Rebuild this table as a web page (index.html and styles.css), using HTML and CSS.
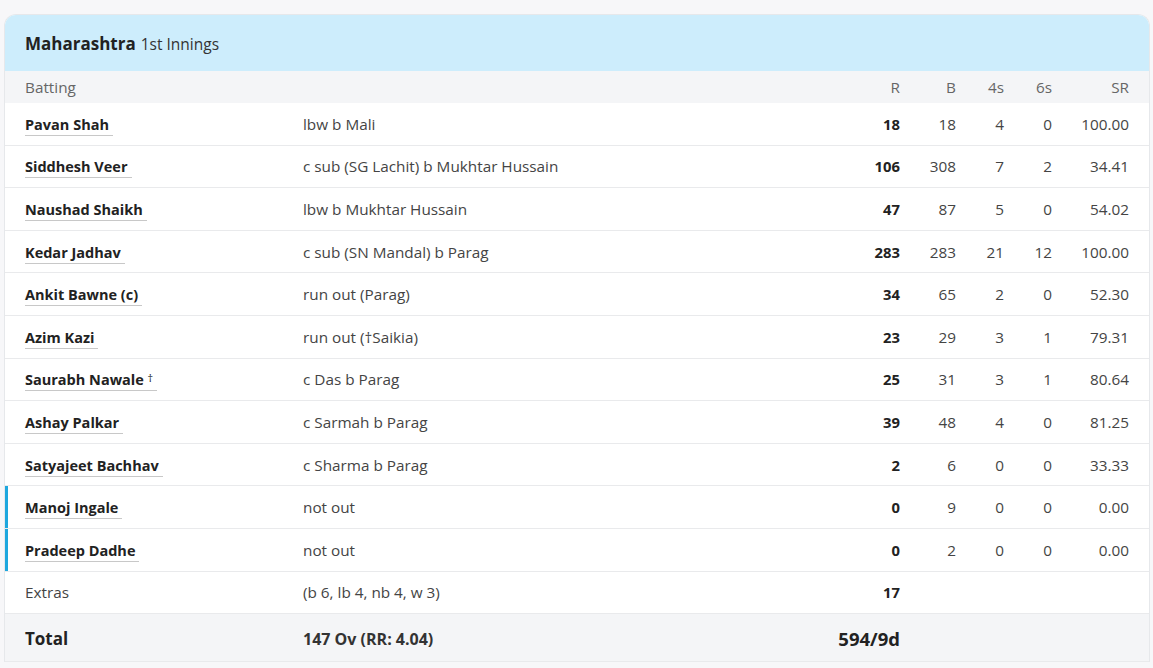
FILE: index.html
```html
<!DOCTYPE html>
<html lang="en">
<head>
    <meta charset="UTF-8">
    <meta name="viewport" content="width=device-width, initial-scale=1.0">
    <title>Maharashtra 1st Innings</title>
    <link rel="stylesheet" href="styles.css">
</head>
<body>

    <!-- Scorecard -->
    <div class="card">
        <div class="card-head">
            <span class="team">Maharashtra</span>
            <span class="innings">1st Innings</span>
        </div>

        <table class="score">
            <colgroup>
                <col class="c-name">
                <col class="c-out">
                <col class="c-r">
                <col class="c-b">
                <col class="c-4">
                <col class="c-6">
                <col class="c-sr">
            </colgroup>
            <thead>
                <tr>
                    <th class="name">Batting</th>
                    <th></th>
                    <th class="num">R</th>
                    <th class="num">B</th>
                    <th class="num">4s</th>
                    <th class="num">6s</th>
                    <th class="num last">SR</th>
                </tr>
            </thead>
            <tbody>
                <tr>
                    <td class="name"><a>Pavan Shah</a></td>
                    <td>lbw b Mali</td>
                    <td class="num runs">18</td><td class="num">18</td><td class="num">4</td><td class="num">0</td><td class="num last">100.00</td>
                </tr>
                <tr>
                    <td class="name"><a>Siddhesh Veer</a></td>
                    <td>c sub (SG Lachit) b Mukhtar Hussain</td>
                    <td class="num runs">106</td><td class="num">308</td><td class="num">7</td><td class="num">2</td><td class="num last">34.41</td>
                </tr>
                <tr>
                    <td class="name"><a>Naushad Shaikh</a></td>
                    <td>lbw b Mukhtar Hussain</td>
                    <td class="num runs">47</td><td class="num">87</td><td class="num">5</td><td class="num">0</td><td class="num last">54.02</td>
                </tr>
                <tr>
                    <td class="name"><a>Kedar Jadhav</a></td>
                    <td>c sub (SN Mandal) b Parag</td>
                    <td class="num runs">283</td><td class="num">283</td><td class="num">21</td><td class="num">12</td><td class="num last">100.00</td>
                </tr>
                <tr>
                    <td class="name"><a>Ankit Bawne (c)</a></td>
                    <td>run out (Parag)</td>
                    <td class="num runs">34</td><td class="num">65</td><td class="num">2</td><td class="num">0</td><td class="num last">52.30</td>
                </tr>
                <tr>
                    <td class="name"><a>Azim Kazi</a></td>
                    <td>run out (†Saikia)</td>
                    <td class="num runs">23</td><td class="num">29</td><td class="num">3</td><td class="num">1</td><td class="num last">79.31</td>
                </tr>
                <tr>
                    <td class="name"><a>Saurabh Nawale <span class="wk">†</span></a></td>
                    <td>c Das b Parag</td>
                    <td class="num runs">25</td><td class="num">31</td><td class="num">3</td><td class="num">1</td><td class="num last">80.64</td>
                </tr>
                <tr>
                    <td class="name"><a>Ashay Palkar</a></td>
                    <td>c Sarmah b Parag</td>
                    <td class="num runs">39</td><td class="num">48</td><td class="num">4</td><td class="num">0</td><td class="num last">81.25</td>
                </tr>
                <tr>
                    <td class="name"><a>Satyajeet Bachhav</a></td>
                    <td>c Sharma b Parag</td>
                    <td class="num runs">2</td><td class="num">6</td><td class="num">0</td><td class="num">0</td><td class="num last">33.33</td>
                </tr>
                <tr class="batting">
                    <td class="name"><a>Manoj Ingale</a></td>
                    <td>not out</td>
                    <td class="num runs">0</td><td class="num">9</td><td class="num">0</td><td class="num">0</td><td class="num last">0.00</td>
                </tr>
                <tr class="batting">
                    <td class="name"><a>Pradeep Dadhe</a></td>
                    <td>not out</td>
                    <td class="num runs">0</td><td class="num">2</td><td class="num">0</td><td class="num">0</td><td class="num last">0.00</td>
                </tr>
                <tr class="extras">
                    <td class="name">Extras</td>
                    <td>(b 6, lb 4, nb 4, w 3)</td>
                    <td class="num runs">17</td><td></td><td></td><td></td><td class="last"></td>
                </tr>
                <tr class="total">
                    <td class="name">Total</td>
                    <td class="overs">147 Ov (RR: 4.04)</td>
                    <td class="num">594/9d</td><td></td><td></td><td></td><td class="last"></td>
                </tr>
            </tbody>
        </table>
    </div>

</body>
</html>
```

FILE: styles.css
```css
body {
    margin: 0;
    font-family: "Open Sans", "Liberation Sans", sans-serif;
    background-color: #f7f7f9;
    color: #444;
}

.card {
    margin: 14px 3px 0 4px;
    background-color: #fff;
    border: 1px solid #e6e8eb;
    border-bottom: none;
    border-radius: 12px 12px 0 0;
    overflow: hidden;
}

.card-head {
    height: 56px;
    padding: 0 20px;
    display: flex;
    align-items: center;
    gap: 5px;
    background-color: #cdedfc;
}

.team {
    font-size: 17px;
    font-weight: 700;
    color: #222;
}

.innings {
    font-size: 15.5px;
    color: #333;
    padding-top: 2px;
}

.score {
    width: 100%;
    border-collapse: collapse;
    table-layout: fixed;
    font-size: 15.3px;
}

.c-name { width: 298px; }
.c-r { width: 80px; }
.c-b { width: 56px; }
.c-4 { width: 48px; }
.c-6 { width: 48px; }
.c-sr { width: 97px; }

.score th {
    height: 32px;
    padding: 0;
    font-weight: 400;
    color: #666;
    text-align: left;
    background-color: #f4f5f7;
}

.score td {
    height: 41.6px;
    padding: 0;
    border-top: 1px solid #e9eaec;
    white-space: nowrap;
}

.score tbody tr:first-child td {
    border-top: none;
}

.score .name {
    padding-left: 20px;
}

.score .num {
    text-align: right;
}

.score .last {
    padding-right: 20px;
}

.name a {
    font-size: 14.5px;
    font-weight: 700;
    color: #222;
    padding-right: 4px;
    padding-bottom: 1px;
    border-bottom: 1px solid #c8c8c8;
}

.wk {
    font-size: 11px;
    vertical-align: 3px;
    font-weight: 400;
    color: #222;
}

.runs {
    font-size: 14.8px;
    font-weight: 700;
    color: #222;
}

/* not out batsmen */
.batting td:first-child {
    box-shadow: inset 3px 0 0 #1ea7de;
}

.total td {
    height: 45px;
    padding-top: 2px;
    background-color: #f4f5f7;
    font-weight: 700;
    color: #222;
    border-bottom: 1px solid #e9eaec;
}

.total .name {
    font-size: 17px;
}

.total .overs {
    font-size: 16px;
    color: #333;
}

.total .num {
    font-size: 18.5px;
}
```
